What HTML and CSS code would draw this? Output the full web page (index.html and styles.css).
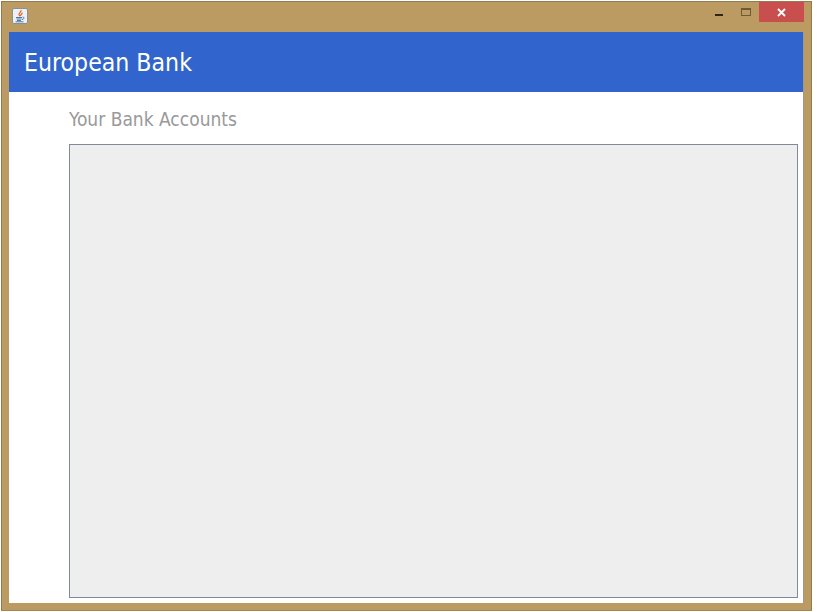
FILE: index.html
```html
<!DOCTYPE html>
<html lang="en">
<head>
  <meta charset="UTF-8" />
  <title>European Bank</title>
  <link rel="stylesheet" href="styles.css">
</head>
<body>
  <div class="window">
    <div class="titlebar">
      <div class="app-icon">
        <svg width="14" height="14" viewBox="0 0 14 14">
          <path d="M8 1C9 2.500 5.500 4 6 5.500C6.300 6.300 6.800 6.800 7 7.200C7 6 10 5 9 3.500" fill="none" stroke="#d9662a" stroke-width="1.200"/>
          <path d="M3 8.500H9M3.500 10H8.500M4 11.500H8" stroke="#4a78a8" stroke-width="1"/>
          <path d="M9.500 8C11.500 7.800 11.500 10.200 9 10.500M2.500 12.800H10.500" fill="none" stroke="#4a78a8" stroke-width="1"/>
        </svg>
      </div>
      <div class="controls">
        <div class="btn-min"><span></span></div>
        <div class="btn-max"><span></span></div>
        <div class="btn-close">
          <svg width="9" height="9" viewBox="0 0 9 9">
            <path d="M1 1L8 8M8 1L1 8" stroke="#fff" stroke-width="1.800"/>
          </svg>
        </div>
      </div>
    </div>
    <div class="content">
      <header class="banner">European Bank</header>
      <div class="main">
        <h2>Your Bank Accounts</h2>
        <div class="panel"></div>
      </div>
    </div>
  </div>
</body>
</html>
```

FILE: styles.css
```css
* {
  margin: 0;
  padding: 0;
  box-sizing: border-box;
}
body {
  background-color: #fff;
  font-family: "DejaVu Sans", sans-serif;
  font-stretch: condensed;
  height: 612px;
  overflow: hidden;
}
.window {
  width: 811px;
  height: 610px;
  margin: 1px 0 0 1px;
  padding: 0 7px 7px 7px;
  background-color: #bb9b61;
  border: 1px solid #8f7a52;
  border-bottom-color: #a08650;
  display: flex;
  flex-direction: column;
}
.titlebar {
  height: 30px;
  flex-shrink: 0;
  display: flex;
  justify-content: space-between;
}
.app-icon {
  width: 16px;
  height: 16px;
  margin: 6px 0 0 3px;
  background-color: #eef0f2;
  border: 1px solid #8b8f94;
  border-radius: 2px;
}
.app-icon svg {
  display: block;
}
.controls {
  display: flex;
  height: 20px;
}
.btn-min {
  width: 8px;
  margin-right: 18px;
  padding-top: 12px;
}
.btn-min span {
  display: block;
  height: 2px;
  background-color: #2e2412;
}
.btn-max {
  width: 10px;
  margin-right: 8px;
  padding-top: 6px;
}
.btn-max span {
  display: block;
  width: 10px;
  height: 8px;
  border: 1px solid #6e5a34;
  border-top-width: 2px;
}
.btn-close {
  width: 45px;
  background-color: #c94f4f;
  display: flex;
  align-items: center;
  justify-content: center;
}
.content {
  flex: 1;
  background-color: #fff;
  border-right: 1px solid #9a9a90;
  display: flex;
  flex-direction: column;
}
.banner {
  height: 60px;
  flex-shrink: 0;
  background-color: #3164cc;
  color: #fff;
  font-size: 24.6px;
  line-height: 62px;
  padding-left: 15px;
}
.main {
  flex: 1;
  display: flex;
  flex-direction: column;
  padding: 0 5px 5px 60px;
}
.main h2 {
  height: 52px;
  font-size: 19px;
  font-weight: 400;
  line-height: 54px;
  color: #999;
}
.panel {
  flex: 1;
  background-color: #eeeeee;
  border: 1px solid #808a9c;
}
```
